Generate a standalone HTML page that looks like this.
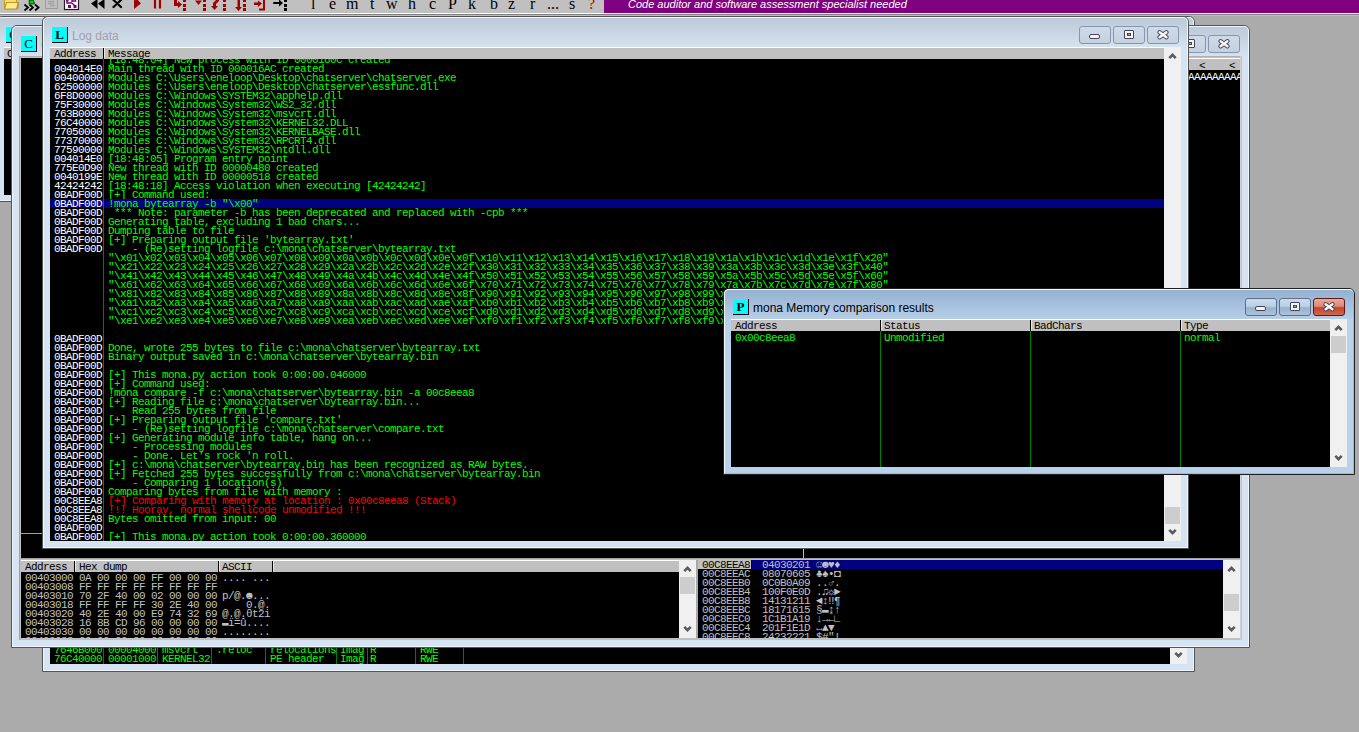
<!DOCTYPE html><html><head><meta charset="utf-8"><style>
*{margin:0;padding:0;box-sizing:border-box}
html,body{width:1359px;height:732px;overflow:hidden;background:#ababab;position:relative}
.a{position:absolute}
.m{position:absolute;font-family:"Liberation Mono",monospace;font-size:11px;letter-spacing:-0.6px;line-height:9px;white-space:pre}
.s{font-family:"Liberation Sans",sans-serif}
.win{position:absolute;border:1px solid #555;border-radius:6px 6px 0 0;background:#d6e3f2}
.win>.in{position:absolute;left:0;top:0;right:0;bottom:0;border:1px solid #eef4fb;border-radius:5px 5px 0 0;background:linear-gradient(#bccad9 0px,#d4e1ee 28px,#d6e3f2 30px)}
.win.act{background:#b9d1ea;border-color:#202020}
.win.act>.in{border-color:#f6fafe #50d8f8 #50d8f8 #f6fafe;background:linear-gradient(#95b1d1 0px,#b5cde7 28px,#b9d1ea 30px)}
.icon.n{font-weight:normal}
.icon{position:absolute;width:16px;height:16px;background:#00ffff;border-right:1px solid #000;border-bottom:1px solid #000;font-family:"Liberation Serif",serif;font-weight:bold;font-size:13px;line-height:15px;text-align:center;color:#000}
.hdr{position:absolute;background:#c0c0c0;border-top:1px solid #fff;height:12px}
.blk{position:absolute;background:#000}
.btn{position:absolute;width:32px;height:18px;border:1px solid #8596b2;border-radius:3px;background:linear-gradient(#d0dbe8,#c3d1e0)}
.sb{position:absolute;background:#f0f0f0}
.thumb{position:absolute;background:#cdcdcd}
.g{color:#00ff00}
.w{color:#ffffff}
.r{color:#ff0000}
.k{color:#000}
.gr{color:#c0c0c0}
</style></head><body>
<div class="a" style="left:0;top:0;width:1359px;height:13px;background:#c0c0c0"></div>
<div class="a" style="left:0;top:13px;width:1359px;height:1px;background:#fff"></div>
<div class="a" style="left:0;top:14px;width:1359px;height:1px;background:#808080"></div>
<div class="a" style="left:0;top:15px;width:1359px;height:1px;background:#c0c0c0"></div>
<div class="a s" style="left:604px;top:0;width:755px;height:13px;background:#800080;color:#fff;font-style:italic;font-size:11px;line-height:8px;padding-left:24px;white-space:nowrap;overflow:hidden">Code auditor and software assessment specialist needed</div>
<div class="a" style="left:311px;top:-4px;font-family:'Liberation Serif',serif;font-size:16px;line-height:16px;color:#000">l</div>
<div class="a" style="left:329px;top:-4px;font-family:'Liberation Serif',serif;font-size:16px;line-height:16px;color:#000">e</div>
<div class="a" style="left:346px;top:-4px;font-family:'Liberation Serif',serif;font-size:16px;line-height:16px;color:#000">m</div>
<div class="a" style="left:370px;top:-4px;font-family:'Liberation Serif',serif;font-size:16px;line-height:16px;color:#000">t</div>
<div class="a" style="left:386px;top:-4px;font-family:'Liberation Serif',serif;font-size:16px;line-height:16px;color:#000">w</div>
<div class="a" style="left:408px;top:-4px;font-family:'Liberation Serif',serif;font-size:16px;line-height:16px;color:#000">h</div>
<div class="a" style="left:429px;top:-4px;font-family:'Liberation Serif',serif;font-size:16px;line-height:16px;color:#000">c</div>
<div class="a" style="left:448px;top:-4px;font-family:'Liberation Serif',serif;font-size:16px;line-height:16px;color:#000">P</div>
<div class="a" style="left:468px;top:-4px;font-family:'Liberation Serif',serif;font-size:16px;line-height:16px;color:#000">k</div>
<div class="a" style="left:490px;top:-4px;font-family:'Liberation Serif',serif;font-size:16px;line-height:16px;color:#000">b</div>
<div class="a" style="left:508px;top:-4px;font-family:'Liberation Serif',serif;font-size:16px;line-height:16px;color:#000">z</div>
<div class="a" style="left:530px;top:-4px;font-family:'Liberation Serif',serif;font-size:16px;line-height:16px;color:#000">r</div>
<div class="a" style="left:547px;top:-4px;font-family:'Liberation Serif',serif;font-size:16px;line-height:16px;color:#000">...</div>
<div class="a" style="left:569px;top:-4px;font-family:'Liberation Serif',serif;font-size:16px;line-height:16px;color:#000">s</div>
<div class="a" style="left:588px;top:-4px;font-family:'Liberation Serif',serif;font-size:16px;line-height:16px;color:#c00000">?</div>

<svg class="a" style="left:0;top:0" width="300" height="13" viewBox="0 0 300 13">
 <path d="M4.5 -1 h12 v10 h-12z" fill="#f5dc70" stroke="#c29a2a" stroke-width="1"/>
 <path d="M6.5 2.5 h12 l-2 6.5 h-12z" fill="#fdeb8c" stroke="#c29a2a" stroke-width="1.2"/>
 <path d="M18 3 v6" stroke="#7a6a40" stroke-width="1" opacity="0.6"/>
 <path d="M24.5 4.5 l3.5 3 l-3.5 3 M29.5 4.5 l3.5 3 l-3.5 3 M35 4.5 l3.5 3 l-3.5 3" fill="none" stroke="#000" stroke-width="1.8"/>
 <path d="M34 0.5 h-4.5 v3 h4.5 v-2" fill="none" stroke="#008000" stroke-width="1.8"/>
 <rect x="45.5" y="-2" width="12" height="10.5" fill="none" stroke="#9c9c9c"/>
 <path d="M48 1.5 h6 M48 3.5 h6 M50 5.5 h5" stroke="#a4a4a4" stroke-width="1.4"/>
 <rect x="64.5" y="-2" width="14" height="11.5" fill="#fff" stroke="#202020" stroke-width="1.2"/>
 <path d="M67 0 v3 h5 M72 -1 v3 M72 1 h3.5 v-2" fill="none" stroke="#800080" stroke-width="1.4"/>
 <rect x="66" y="-1" width="2.5" height="2.5" fill="#800080"/>
 <rect x="68" y="5" width="3" height="3" fill="#800080"/>
 <path d="M72 3 l3 3" stroke="#800080" stroke-width="1.4"/>
 <rect x="73.5" y="5" width="3" height="3" fill="#800080"/>
 <path d="M97.5 -1 v10 l-6.5 -5.5z M104.5 -1 v10 l-6.5 -5.5z" fill="#000"/>
 <path d="M113.5 0 l7.5 7 M121 0 l-7.5 7" stroke="#000" stroke-width="2.2" stroke-linecap="round"/>
 <path d="M134 -4 v13 l7 -5.5z" fill="#a00000"/>
 <path d="M155 -1 v9.5 M160 -1 v9.5" stroke="#a00000" stroke-width="2.2"/>
 <path d="M174 -1 v7 h4 v2 l4 -3.5 l-4 -3.5 v2 h-1 v-4z" fill="#a00000"/>
 <path d="M184.5 -1 v3 M184.5 4 v3 M184.5 8 v3" stroke="#a00000" stroke-width="3"/>
 <path d="M195 0.5 h7 l-3.5 4.5z" fill="#a00000"/>
 <path d="M204.5 -1 v3 M204.5 4 v3 M204.5 8 v3" stroke="#a00000" stroke-width="3"/>
 <path d="M219 -1 v2 l-3 3 v2 h2 l-3.5 4 l-3.5 -4 h2 v-3 l3 -3 v-1z" fill="#a00000"/>
 <path d="M224.5 -1 v3 M224.5 4 v3 M224.5 8 v3" stroke="#a00000" stroke-width="3"/>
 <path d="M237.5 -1 h2.5 v8 h2 l-3.5 4 l-3.5 -4 h2.5z" fill="#a00000"/>
 <path d="M244.5 -1 v3 M244.5 4 v3 M244.5 8 v3" stroke="#a00000" stroke-width="3"/>
 <path d="M254 2.5 h4 v-2 l4 3 l-4 3.5 v-2 h-4z" fill="#a00000"/>
 <path d="M264 -1 v10.5 h-5" fill="none" stroke="#a00000" stroke-width="2"/>
 <path d="M273 2.5 l1 -0.5 h5 v-2.5 l4 3.5 l-4 3.5 v-2.5 h-5 l-1 -0.5z" fill="#000"/>
 <path d="M285.5 -1 v3 M285.5 4 v3 M285.5 8 v3" stroke="#000" stroke-width="3"/>
</svg>
<div class="win" style="left:-4px;top:16px;width:704px;height:186px"><div class="in"></div></div>
<div class="icon n" style="left:6px;top:27px">C</div>
<div class="hdr" style="left:4px;top:47px;width:600px"></div>
<div class="m k" style="left:7px;top:50px">C</div>
<div class="blk" style="left:4px;top:59px;width:600px;height:136px"></div>
<div class="win" style="left:42px;top:16px;width:1153px;height:656px"><div class="in"></div></div>
<div class="icon" style="left:52px;top:27px">M</div>
<div class="a s" style="left:72px;top:29px;font-size:12px;line-height:14px;color:#a59eab;white-space:nowrap">Memory map</div>
<div class="btn" style="left:1153px;top:26px"></div>
<svg class="a" style="left:1162px;top:29px" width="14" height="11" viewBox="0 0 14 11"><path d="M3.6 3.2 L10.4 8.2 M10.4 3.2 L3.6 8.2" stroke="#45455a" stroke-width="4.4" stroke-linecap="round"/><path d="M3.6 3.2 L10.4 8.2 M10.4 3.2 L3.6 8.2" stroke="#f6f6f6" stroke-width="2.5" stroke-linecap="round"/></svg>
<div class="btn" style="left:1119px;top:26px"></div>
<div class="a" style="left:1130px;top:30px;width:10px;height:9px;background:#f4f4f4;border:1px solid #45455a;border-radius:1px"><div class="a" style="left:2px;top:2px;width:4px;height:3px;background:#8fa4c0;border:1px solid #45455a"></div></div>
<div class="btn" style="left:1085px;top:26px"></div>
<div class="a" style="left:1095px;top:34px;width:11px;height:5px;background:#f4f4f4;border:1px solid #45455a;border-radius:2px"></div>
<div class="a" style="left:50px;top:47px;width:1120px;height:617px;background:#000;overflow:hidden">
<div class="m g" style="left:4px;top:599px">7646B000</div>
<div class="m g" style="left:58px;top:599px">00004000</div>
<div class="m g" style="left:112px;top:599px">msvcrt</div>
<div class="m g" style="left:166px;top:599px">.reloc</div>
<div class="m g" style="left:220px;top:599px">relocations</div>
<div class="m g" style="left:290px;top:599px">Imag</div>
<div class="m g" style="left:320px;top:599px">R</div>
<div class="m g" style="left:370px;top:599px">RWE</div>
<div class="m g" style="left:4px;top:608px">76C40000</div>
<div class="m g" style="left:58px;top:608px">00001000</div>
<div class="m g" style="left:112px;top:608px">KERNEL32</div>
<div class="m g" style="left:166px;top:608px"></div>
<div class="m g" style="left:220px;top:608px">PE header</div>
<div class="m g" style="left:290px;top:608px">Imag</div>
<div class="m g" style="left:320px;top:608px">R</div>
<div class="m g" style="left:370px;top:608px">RWE</div>
<div class="a" style="left:53px;top:0px;width:1px;height:617px;background:#008000"></div>
<div class="a" style="left:107px;top:0px;width:1px;height:617px;background:#008000"></div>
<div class="a" style="left:161px;top:0px;width:1px;height:617px;background:#008000"></div>
<div class="a" style="left:215px;top:0px;width:1px;height:617px;background:#008000"></div>
<div class="a" style="left:286px;top:0px;width:1px;height:617px;background:#008000"></div>
<div class="a" style="left:317px;top:0px;width:1px;height:617px;background:#008000"></div>
<div class="a" style="left:365px;top:0px;width:1px;height:617px;background:#008000"></div>
<div class="a" style="left:413px;top:0px;width:1px;height:617px;background:#008000"></div>
</div>
<div class="sb" style="left:1170px;top:47px;width:17px;height:617px"></div>
<svg class="a" style="left:1170px;top:47px" width="17" height="617"><path d="M5.3 11.2 l3.2 -3.4 l3.2 3.4" fill="none" stroke="#5a5a5a" stroke-width="2.6"/><path d="M5.3 605.8 l3.2 3.4 l3.2 -3.4" fill="none" stroke="#5a5a5a" stroke-width="2.6"/></svg>
<div class="win" style="left:11px;top:25px;width:1239px;height:623px"><div class="in"></div></div>
<div class="icon n" style="left:21px;top:36px">C</div>
<div class="a s" style="left:41px;top:38px;font-size:12px;line-height:14px;color:#a59eab;white-space:nowrap">CPU - main thread, module chatserv</div>
<div class="btn" style="left:1208px;top:35px"></div>
<svg class="a" style="left:1217px;top:38px" width="14" height="11" viewBox="0 0 14 11"><path d="M3.6 3.2 L10.4 8.2 M10.4 3.2 L3.6 8.2" stroke="#45455a" stroke-width="4.4" stroke-linecap="round"/><path d="M3.6 3.2 L10.4 8.2 M10.4 3.2 L3.6 8.2" stroke="#f6f6f6" stroke-width="2.5" stroke-linecap="round"/></svg>
<div class="btn" style="left:1174px;top:35px"></div>
<div class="a" style="left:1185px;top:39px;width:10px;height:9px;background:#f4f4f4;border:1px solid #45455a;border-radius:1px"><div class="a" style="left:2px;top:2px;width:4px;height:3px;background:#8fa4c0;border:1px solid #45455a"></div></div>
<div class="btn" style="left:1140px;top:35px"></div>
<div class="a" style="left:1150px;top:43px;width:11px;height:5px;background:#f4f4f4;border:1px solid #45455a;border-radius:2px"></div>
<div class="a" style="left:19px;top:56px;width:1223px;height:1px;background:#b0b0b0"></div>
<div class="a" style="left:19px;top:57px;width:1223px;height:1px;background:#c0c0c0"></div>
<div class="a" style="left:19px;top:56px;width:1px;height:584px;background:#a0a0a0"></div>
<div class="a" style="left:20px;top:57px;width:1px;height:583px;background:#c0c0c0"></div>
<div class="blk" style="left:21px;top:58px;width:1219px;height:500px"></div>
<div class="a" style="left:21px;top:533px;width:782px;height:1px;background:#a0a0a0"></div>
<div class="hdr" style="left:1100px;top:58px;width:140px"></div>
<div class="a" style="left:1100px;top:70px;width:140px;height:20px;overflow:hidden">
<div class="m w" style="left:40px;top:3px">AAAAAAAAAAAAAAAAA</div>
</div>
<div class="m k" style="left:1199px;top:62px">&lt;    &lt;</div>
<div class="a" style="left:803px;top:549px;width:1px;height:9px;background:#c0c0c0"></div>
<div class="a" style="left:21px;top:558px;width:1219px;height:1px;background:#a0a0a0"></div>
<div class="a" style="left:21px;top:559px;width:1219px;height:1px;background:#c0c0c0"></div>
<div class="a" style="left:21px;top:638px;width:1219px;height:2px;background:#c0c0c0"></div>
<div class="a" style="left:1240px;top:56px;width:1px;height:584px;background:#d0d0d0"></div>
<div class="a" style="left:1241px;top:56px;width:1px;height:584px;background:#c4c4c4"></div>
<div class="hdr" style="left:21px;top:560px;width:658px"></div>
<div class="blk" style="left:21px;top:572px;width:658px;height:66px"></div>
<div class="a" style="left:74px;top:561px;width:1px;height:11px;background:#000"></div>
<div class="a" style="left:75px;top:561px;width:1px;height:10px;background:#e8e8e8"></div>
<div class="a" style="left:218px;top:561px;width:1px;height:11px;background:#000"></div>
<div class="a" style="left:219px;top:561px;width:1px;height:10px;background:#e8e8e8"></div>
<div class="a" style="left:272px;top:561px;width:1px;height:11px;background:#000"></div>
<div class="a" style="left:273px;top:561px;width:1px;height:10px;background:#e8e8e8"></div>
<div class="m k" style="left:25px;top:563px">Address</div>
<div class="m k" style="left:79px;top:563px">Hex dump</div>
<div class="m k" style="left:222px;top:563px">ASCII</div>
<div class="a" style="left:21px;top:572px;width:658px;height:66px;overflow:hidden">
<div class="m gr" style="left:4px;top:2px">00403000</div>
<div class="m gr" style="left:58px;top:2px">0A 00 00 00 FF 00 00 00</div>
<div class="m gr" style="left:201px;top:2px">.... ...</div>
<div class="m gr" style="left:4px;top:11px">00403008</div>
<div class="m gr" style="left:58px;top:11px">FF FF FF FF FF FF FF FF</div>
<div class="m gr" style="left:201px;top:11px"></div>
<div class="m gr" style="left:4px;top:20px">00403010</div>
<div class="m gr" style="left:58px;top:20px">70 2F 40 00 02 00 00 00</div>
<div class="m gr" style="left:201px;top:20px">p/@.☻...</div>
<div class="m gr" style="left:4px;top:29px">00403018</div>
<div class="m gr" style="left:58px;top:29px">FF FF FF FF 30 2E 40 00</div>
<div class="m gr" style="left:201px;top:29px">    0.@.</div>
<div class="m gr" style="left:4px;top:38px">00403020</div>
<div class="m gr" style="left:58px;top:38px">40 2E 40 00 E9 74 32 69</div>
<div class="m gr" style="left:201px;top:38px">@.@.θt2i</div>
<div class="m gr" style="left:4px;top:47px">00403028</div>
<div class="m gr" style="left:58px;top:47px">16 8B CD 96 00 00 00 00</div>
<div class="m gr" style="left:201px;top:47px">▬ï=û....</div>
<div class="m gr" style="left:4px;top:56px">00403030</div>
<div class="m gr" style="left:58px;top:56px">00 00 00 00 00 00 00 00</div>
<div class="m gr" style="left:201px;top:56px">........</div>
<div class="m gr" style="left:4px;top:65px">00403038</div>
<div class="m gr" style="left:58px;top:65px">00 00 00 00 00 00 00 00</div>
<div class="m gr" style="left:201px;top:65px">........</div>
</div>
<div class="sb" style="left:679px;top:560px;width:17px;height:78px"></div>
<div class="thumb" style="left:680px;top:577px;width:15px;height:17px"></div>
<svg class="a" style="left:679px;top:560px" width="17" height="78"><path d="M5.3 11.2 l3.2 -3.4 l3.2 3.4" fill="none" stroke="#5a5a5a" stroke-width="2.6"/><path d="M5.3 66.8 l3.2 3.4 l3.2 -3.4" fill="none" stroke="#5a5a5a" stroke-width="2.6"/></svg>
<div class="a" style="left:696px;top:560px;width:2px;height:78px;background:#a8a8a8"></div>
<div class="a" style="left:698px;top:560px;width:525px;height:78px;background:#000;overflow:hidden">
<div class="a" style="left:0;top:0;width:53px;height:9px;background:#c0c0c0"></div>
<div class="a" style="left:53px;top:0;width:472px;height:9px;background:#000080"></div>
<div class="a" style="left:53px;top:0px;width:1px;height:9px;background:#000"></div>
<div class="a" style="left:113px;top:0px;width:1px;height:9px;background:#000"></div>
<div class="a" style="left:143px;top:0px;width:1px;height:9px;background:#000"></div>
<div class="m k" style="left:4px;top:1px">00C8EEA8</div>
<div class="m gr" style="left:64px;top:1px">04030201</div>
<div class="m gr" style="left:118px;top:1px">☺☻♥♦</div>
<div class="m gr" style="left:4px;top:10px">00C8EEAC</div>
<div class="m gr" style="left:64px;top:10px">08070605</div>
<div class="m gr" style="left:118px;top:10px">♣♠•◘</div>
<div class="m gr" style="left:4px;top:19px">00C8EEB0</div>
<div class="m gr" style="left:64px;top:19px">0C0B0A09</div>
<div class="m gr" style="left:118px;top:19px">..♂.</div>
<div class="m gr" style="left:4px;top:28px">00C8EEB4</div>
<div class="m gr" style="left:64px;top:28px">100F0E0D</div>
<div class="m gr" style="left:118px;top:28px">.♫☼►</div>
<div class="m gr" style="left:4px;top:37px">00C8EEB8</div>
<div class="m gr" style="left:64px;top:37px">14131211</div>
<div class="m gr" style="left:118px;top:37px">◄↕‼¶</div>
<div class="m gr" style="left:4px;top:46px">00C8EEBC</div>
<div class="m gr" style="left:64px;top:46px">18171615</div>
<div class="m gr" style="left:118px;top:46px">§▬↨↑</div>
<div class="m gr" style="left:4px;top:55px">00C8EEC0</div>
<div class="m gr" style="left:64px;top:55px">1C1B1A19</div>
<div class="m gr" style="left:118px;top:55px">↓→←∟</div>
<div class="m gr" style="left:4px;top:64px">00C8EEC4</div>
<div class="m gr" style="left:64px;top:64px">201F1E1D</div>
<div class="m gr" style="left:118px;top:64px">↔▲▼ </div>
<div class="m gr" style="left:4px;top:73px">00C8EEC8</div>
<div class="m gr" style="left:64px;top:73px">24232221</div>
<div class="m gr" style="left:118px;top:73px">$#"!</div>
</div>
<div class="sb" style="left:1223px;top:560px;width:17px;height:78px"></div>
<div class="thumb" style="left:1224px;top:594px;width:15px;height:17px"></div>
<svg class="a" style="left:1223px;top:560px" width="17" height="78"><path d="M5.3 11.2 l3.2 -3.4 l3.2 3.4" fill="none" stroke="#5a5a5a" stroke-width="2.6"/><path d="M5.3 66.8 l3.2 3.4 l3.2 -3.4" fill="none" stroke="#5a5a5a" stroke-width="2.6"/></svg>
<div class="win" style="left:42px;top:16px;width:1147px;height:533px"><div class="in"></div></div>
<div class="icon" style="left:52px;top:27px">L</div>
<div class="a s" style="left:72px;top:29px;font-size:12px;line-height:14px;color:#a59eab;white-space:nowrap">Log data</div>
<div class="btn" style="left:1147px;top:26px"></div>
<svg class="a" style="left:1156px;top:29px" width="14" height="11" viewBox="0 0 14 11"><path d="M3.6 3.2 L10.4 8.2 M10.4 3.2 L3.6 8.2" stroke="#45455a" stroke-width="4.4" stroke-linecap="round"/><path d="M3.6 3.2 L10.4 8.2 M10.4 3.2 L3.6 8.2" stroke="#f6f6f6" stroke-width="2.5" stroke-linecap="round"/></svg>
<div class="btn" style="left:1113px;top:26px"></div>
<div class="a" style="left:1124px;top:30px;width:10px;height:9px;background:#f4f4f4;border:1px solid #45455a;border-radius:1px"><div class="a" style="left:2px;top:2px;width:4px;height:3px;background:#8fa4c0;border:1px solid #45455a"></div></div>
<div class="btn" style="left:1079px;top:26px"></div>
<div class="a" style="left:1089px;top:34px;width:11px;height:5px;background:#f4f4f4;border:1px solid #45455a;border-radius:2px"></div>
<div class="hdr" style="left:50px;top:47px;width:1114px"></div>
<div class="a" style="left:103px;top:48px;width:1px;height:11px;background:#000"></div>
<div class="a" style="left:104px;top:48px;width:1px;height:10px;background:#e8e8e8"></div>
<div class="m k" style="left:54px;top:50px">Address</div>
<div class="m k" style="left:108px;top:50px">Message</div>
<div class="a" style="left:50px;top:59px;width:1114px;height:482px;background:#000;overflow:hidden">
<div class="m g" style="left:58px;top:-3px">[18:48:04] New process with ID 0000160C created</div>
<div class="m w" style="left:4px;top:6px">004014E0</div>
<div class="m g" style="left:58px;top:6px">Main thread with ID 000016AC created</div>
<div class="m w" style="left:4px;top:15px">00400000</div>
<div class="m g" style="left:58px;top:15px">Modules C:\Users\eneloop\Desktop\chatserver\chatserver.exe</div>
<div class="m w" style="left:4px;top:24px">62500000</div>
<div class="m g" style="left:58px;top:24px">Modules C:\Users\eneloop\Desktop\chatserver\essfunc.dll</div>
<div class="m w" style="left:4px;top:33px">6F8D0000</div>
<div class="m g" style="left:58px;top:33px">Modules C:\Windows\SYSTEM32\apphelp.dll</div>
<div class="m w" style="left:4px;top:42px">75F30000</div>
<div class="m g" style="left:58px;top:42px">Modules C:\Windows\System32\WS2_32.dll</div>
<div class="m w" style="left:4px;top:51px">763B0000</div>
<div class="m g" style="left:58px;top:51px">Modules C:\Windows\System32\msvcrt.dll</div>
<div class="m w" style="left:4px;top:60px">76C40000</div>
<div class="m g" style="left:58px;top:60px">Modules C:\Windows\System32\KERNEL32.DLL</div>
<div class="m w" style="left:4px;top:69px">77050000</div>
<div class="m g" style="left:58px;top:69px">Modules C:\Windows\System32\KERNELBASE.dll</div>
<div class="m w" style="left:4px;top:78px">77370000</div>
<div class="m g" style="left:58px;top:78px">Modules C:\Windows\System32\RPCRT4.dll</div>
<div class="m w" style="left:4px;top:87px">77590000</div>
<div class="m g" style="left:58px;top:87px">Modules C:\Windows\SYSTEM32\ntdll.dll</div>
<div class="m w" style="left:4px;top:96px">004014E0</div>
<div class="m g" style="left:58px;top:96px">[18:48:05] Program entry point</div>
<div class="m w" style="left:4px;top:105px">775E0D90</div>
<div class="m g" style="left:58px;top:105px">New thread with ID 00000480 created</div>
<div class="m w" style="left:4px;top:114px">0040199E</div>
<div class="m g" style="left:58px;top:114px">New thread with ID 00000518 created</div>
<div class="m w" style="left:4px;top:123px">42424242</div>
<div class="m g" style="left:58px;top:123px">[18:48:18] Access violation when executing [42424242]</div>
<div class="m w" style="left:4px;top:132px">0BADF00D</div>
<div class="m g" style="left:58px;top:132px">[+] Command used:</div>
<div class="a" style="left:0;top:140px;width:1114px;height:9px;background:#000080"></div>
<div class="m w" style="left:4px;top:141px">0BADF00D</div>
<div class="m g" style="left:58px;top:141px">!mona bytearray -b "\x00"</div>
<div class="m w" style="left:4px;top:150px">0BADF00D</div>
<div class="m g" style="left:58px;top:150px"> *** Note: parameter -b has been deprecated and replaced with -cpb ***</div>
<div class="m w" style="left:4px;top:159px">0BADF00D</div>
<div class="m g" style="left:58px;top:159px">Generating table, excluding 1 bad chars...</div>
<div class="m w" style="left:4px;top:168px">0BADF00D</div>
<div class="m g" style="left:58px;top:168px">Dumping table to file</div>
<div class="m w" style="left:4px;top:177px">0BADF00D</div>
<div class="m g" style="left:58px;top:177px">[+] Preparing output file 'bytearray.txt'</div>
<div class="m w" style="left:4px;top:186px">0BADF00D</div>
<div class="m g" style="left:58px;top:186px">    - (Re)setting logfile c:\mona\chatserver\bytearray.txt</div>
<div class="m g" style="left:58px;top:195px">"\x01\x02\x03\x04\x05\x06\x07\x08\x09\x0a\x0b\x0c\x0d\x0e\x0f\x10\x11\x12\x13\x14\x15\x16\x17\x18\x19\x1a\x1b\x1c\x1d\x1e\x1f\x20"</div>
<div class="m g" style="left:58px;top:204px">"\x21\x22\x23\x24\x25\x26\x27\x28\x29\x2a\x2b\x2c\x2d\x2e\x2f\x30\x31\x32\x33\x34\x35\x36\x37\x38\x39\x3a\x3b\x3c\x3d\x3e\x3f\x40"</div>
<div class="m g" style="left:58px;top:213px">"\x41\x42\x43\x44\x45\x46\x47\x48\x49\x4a\x4b\x4c\x4d\x4e\x4f\x50\x51\x52\x53\x54\x55\x56\x57\x58\x59\x5a\x5b\x5c\x5d\x5e\x5f\x60"</div>
<div class="m g" style="left:58px;top:222px">"\x61\x62\x63\x64\x65\x66\x67\x68\x69\x6a\x6b\x6c\x6d\x6e\x6f\x70\x71\x72\x73\x74\x75\x76\x77\x78\x79\x7a\x7b\x7c\x7d\x7e\x7f\x80"</div>
<div class="m g" style="left:58px;top:231px">"\x81\x82\x83\x84\x85\x86\x87\x88\x89\x8a\x8b\x8c\x8d\x8e\x8f\x90\x91\x92\x93\x94\x95\x96\x97\x98\x99\x9a\x9b\x9c\x9d\x9e\x9f\xa0"</div>
<div class="m g" style="left:58px;top:240px">"\xa1\xa2\xa3\xa4\xa5\xa6\xa7\xa8\xa9\xaa\xab\xac\xad\xae\xaf\xb0\xb1\xb2\xb3\xb4\xb5\xb6\xb7\xb8\xb9\xba\xbb\xbc\xbd\xbe\xbf\xc0"</div>
<div class="m g" style="left:58px;top:249px">"\xc1\xc2\xc3\xc4\xc5\xc6\xc7\xc8\xc9\xca\xcb\xcc\xcd\xce\xcf\xd0\xd1\xd2\xd3\xd4\xd5\xd6\xd7\xd8\xd9\xda\xdb\xdc\xdd\xde\xdf\xe0"</div>
<div class="m g" style="left:58px;top:258px">"\xe1\xe2\xe3\xe4\xe5\xe6\xe7\xe8\xe9\xea\xeb\xec\xed\xee\xef\xf0\xf1\xf2\xf3\xf4\xf5\xf6\xf7\xf8\xf9\xfa\xfb\xfc\xfd\xfe\xff"</div>
<div class="m w" style="left:4px;top:276px">0BADF00D</div>
<div class="m w" style="left:4px;top:285px">0BADF00D</div>
<div class="m g" style="left:58px;top:285px">Done, wrote 255 bytes to file c:\mona\chatserver\bytearray.txt</div>
<div class="m w" style="left:4px;top:294px">0BADF00D</div>
<div class="m g" style="left:58px;top:294px">Binary output saved in c:\mona\chatserver\bytearray.bin</div>
<div class="m w" style="left:4px;top:303px">0BADF00D</div>
<div class="m w" style="left:4px;top:312px">0BADF00D</div>
<div class="m g" style="left:58px;top:312px">[+] This mona.py action took 0:00:00.046000</div>
<div class="m w" style="left:4px;top:321px">0BADF00D</div>
<div class="m g" style="left:58px;top:321px">[+] Command used:</div>
<div class="m w" style="left:4px;top:330px">0BADF00D</div>
<div class="m g" style="left:58px;top:330px">!mona compare -f c:\mona\chatserver\bytearray.bin -a 00c8eea8</div>
<div class="m w" style="left:4px;top:339px">0BADF00D</div>
<div class="m g" style="left:58px;top:339px">[+] Reading file c:\mona\chatserver\bytearray.bin...</div>
<div class="m w" style="left:4px;top:348px">0BADF00D</div>
<div class="m g" style="left:58px;top:348px">    Read 255 bytes from file</div>
<div class="m w" style="left:4px;top:357px">0BADF00D</div>
<div class="m g" style="left:58px;top:357px">[+] Preparing output file 'compare.txt'</div>
<div class="m w" style="left:4px;top:366px">0BADF00D</div>
<div class="m g" style="left:58px;top:366px">    - (Re)setting logfile c:\mona\chatserver\compare.txt</div>
<div class="m w" style="left:4px;top:375px">0BADF00D</div>
<div class="m g" style="left:58px;top:375px">[+] Generating module info table, hang on...</div>
<div class="m w" style="left:4px;top:384px">0BADF00D</div>
<div class="m g" style="left:58px;top:384px">    - Processing modules</div>
<div class="m w" style="left:4px;top:393px">0BADF00D</div>
<div class="m g" style="left:58px;top:393px">    - Done. Let's rock 'n roll.</div>
<div class="m w" style="left:4px;top:402px">0BADF00D</div>
<div class="m g" style="left:58px;top:402px">[+] c:\mona\chatserver\bytearray.bin has been recognized as RAW bytes.</div>
<div class="m w" style="left:4px;top:411px">0BADF00D</div>
<div class="m g" style="left:58px;top:411px">[+] Fetched 255 bytes successfully from c:\mona\chatserver\bytearray.bin</div>
<div class="m w" style="left:4px;top:420px">0BADF00D</div>
<div class="m g" style="left:58px;top:420px">    - Comparing 1 location(s)</div>
<div class="m w" style="left:4px;top:429px">0BADF00D</div>
<div class="m g" style="left:58px;top:429px">Comparing bytes from file with memory :</div>
<div class="m w" style="left:4px;top:438px">00C8EEA8</div>
<div class="m r" style="left:58px;top:438px">[+] Comparing with memory at location : 0x00c8eea8 (Stack)</div>
<div class="m w" style="left:4px;top:447px">00C8EEA8</div>
<div class="m r" style="left:58px;top:447px">!!! Hooray, normal shellcode unmodified !!!</div>
<div class="m w" style="left:4px;top:456px">00C8EEA8</div>
<div class="m g" style="left:58px;top:456px">Bytes omitted from input: 00</div>
<div class="m w" style="left:4px;top:465px">0BADF00D</div>
<div class="m w" style="left:4px;top:474px">0BADF00D</div>
<div class="m g" style="left:58px;top:474px">[+] This mona.py action took 0:00:00.360000</div>
<div class="a" style="left:53px;top:0px;width:1px;height:482px;background:#008000"></div>
</div>
<div class="sb" style="left:1164px;top:47px;width:17px;height:494px"></div>
<div class="thumb" style="left:1165px;top:507px;width:15px;height:17px"></div>
<svg class="a" style="left:1164px;top:47px" width="17" height="494"><path d="M5.3 11.2 l3.2 -3.4 l3.2 3.4" fill="none" stroke="#5a5a5a" stroke-width="2.6"/><path d="M5.3 482.8 l3.2 3.4 l3.2 -3.4" fill="none" stroke="#5a5a5a" stroke-width="2.6"/></svg>
<div class="win act" style="left:723px;top:288px;width:632px;height:187px"><div class="in"></div></div>
<div class="icon" style="left:733px;top:299px">P</div>
<div class="a s" style="left:753px;top:301px;font-size:12px;line-height:14px;color:#000;white-space:nowrap">mona Memory comparison results</div>
<div class="btn" style="left:1313px;top:298px;border-color:#5a1a1a;background:linear-gradient(#e9a99a 0%,#dd8a78 45%,#c4442c 55%,#d26850 100%)"></div>
<svg class="a" style="left:1322px;top:301px" width="14" height="11" viewBox="0 0 14 11"><path d="M3.6 3.2 L10.4 8.2 M10.4 3.2 L3.6 8.2" stroke="#45455a" stroke-width="4.4" stroke-linecap="round"/><path d="M3.6 3.2 L10.4 8.2 M10.4 3.2 L3.6 8.2" stroke="#f6f6f6" stroke-width="2.5" stroke-linecap="round"/></svg>
<div class="btn" style="left:1279px;top:298px;border-color:#5f6f8a;background:linear-gradient(#c9daec 0%,#bcd0e6 45%,#98b1cc 55%,#adc3db 100%)"></div>
<div class="a" style="left:1290px;top:302px;width:10px;height:9px;background:#f4f4f4;border:1px solid #45455a;border-radius:1px"><div class="a" style="left:2px;top:2px;width:4px;height:3px;background:#8fa4c0;border:1px solid #45455a"></div></div>
<div class="btn" style="left:1245px;top:298px;border-color:#5f6f8a;background:linear-gradient(#c9daec 0%,#bcd0e6 45%,#98b1cc 55%,#adc3db 100%)"></div>
<div class="a" style="left:1255px;top:306px;width:11px;height:5px;background:#f4f4f4;border:1px solid #45455a;border-radius:2px"></div>
<div class="hdr" style="left:731px;top:319px;width:599px"></div>
<div class="blk" style="left:731px;top:331px;width:599px;height:136px"></div>
<div class="a" style="left:880px;top:320px;width:1px;height:11px;background:#000"></div>
<div class="a" style="left:881px;top:320px;width:1px;height:10px;background:#e8e8e8"></div>
<div class="a" style="left:880px;top:331px;width:1px;height:136px;background:#008000"></div>
<div class="a" style="left:1030px;top:320px;width:1px;height:11px;background:#000"></div>
<div class="a" style="left:1031px;top:320px;width:1px;height:10px;background:#e8e8e8"></div>
<div class="a" style="left:1030px;top:331px;width:1px;height:136px;background:#008000"></div>
<div class="a" style="left:1180px;top:320px;width:1px;height:11px;background:#000"></div>
<div class="a" style="left:1181px;top:320px;width:1px;height:10px;background:#e8e8e8"></div>
<div class="a" style="left:1180px;top:331px;width:1px;height:136px;background:#008000"></div>
<div class="m k" style="left:735px;top:322px">Address</div>
<div class="m k" style="left:884px;top:322px">Status</div>
<div class="m k" style="left:1034px;top:322px">BadChars</div>
<div class="m k" style="left:1184px;top:322px">Type</div>
<div class="m g" style="left:735px;top:334px">0x00c8eea8</div>
<div class="m g" style="left:884px;top:334px">Unmodified</div>
<div class="m g" style="left:1184px;top:334px">normal</div>
<div class="sb" style="left:1330px;top:319px;width:17px;height:148px"></div>
<div class="thumb" style="left:1331px;top:336px;width:15px;height:17px"></div>
<svg class="a" style="left:1330px;top:319px" width="17" height="148"><path d="M5.3 11.2 l3.2 -3.4 l3.2 3.4" fill="none" stroke="#5a5a5a" stroke-width="2.6"/><path d="M5.3 136.8 l3.2 3.4 l3.2 -3.4" fill="none" stroke="#5a5a5a" stroke-width="2.6"/></svg>
</body></html>
